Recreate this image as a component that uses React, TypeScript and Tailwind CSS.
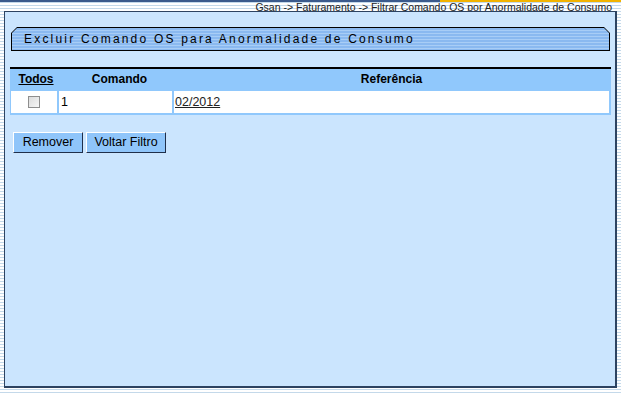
export default function App() {
  return (
    <div className="w-[621px] h-[394px] flex flex-col overflow-hidden bg-[repeating-linear-gradient(to_bottom,#ffffff_0px,#ffffff_2px,#c4d9ea_2px,#c4d9ea_3px)] font-['Liberation_Sans',Arial,sans-serif] text-black">
      {/* top strip */}
      <div className="flex h-[2px] shrink-0">
        <div className="w-[440px] bg-[#3b5a8c]" />
        <div className="flex-1 bg-[#f2b300]" />
      </div>
      <div className="h-[9px] shrink-0 flex justify-end pr-[9px] text-[10.5px] leading-[10px] text-[#222]">
        Gsan -&gt; Faturamento -&gt; Filtrar Comando OS por Anormalidade de Consumo
      </div>

      {/* main panel */}
      <div className="ml-[4px] w-[613px] h-[377px] shrink-0 bg-[#cbe5fe] border-l border-t border-r-2 border-b-2 border-[#2d4361] flex flex-col">
        {/* title bar */}
        <div className="mt-[15px] ml-[6px] mr-[5px] h-[24px] bg-black [clip-path:polygon(6px_0,calc(100%-6px)_0,100%_6px,100%_100%,0_100%,0_6px)] p-[1px]">
          <div className="h-full flex items-center pl-[12px] tracking-[2.2px] text-[12px] bg-[repeating-linear-gradient(to_bottom,#8ab9f0_0px,#8ab9f0_2px,#a8cdf6_2px,#a8cdf6_3px)] [clip-path:polygon(5px_0,calc(100%-5px)_0,100%_5px,100%_100%,0_100%,0_5px)]">
            Excluir Comando OS para Anormalidade de Consumo
          </div>
        </div>

        {/* table */}
        <div className="mt-[16px] ml-[5px] mr-[4px] bg-[#90c8fc] border-t-2 border-black pl-[1px] pr-[2px] pb-[2px]">
          <div className="grid grid-cols-[46px_113px_1fr] gap-x-[2px] h-[20px] items-center text-[12px] font-bold">
            <div className="text-center underline pl-[4px]">Todos</div>
            <div className="text-center pl-[8px]">Comando</div>
            <div className="text-center">Referência</div>
          </div>
          <div className="grid grid-cols-[46px_113px_1fr] gap-x-[2px] mt-[2px] h-[22px] text-[12.5px]">
            <div className="bg-white flex items-center justify-center pr-[1px]">
              <div className="w-[12px] h-[12px] border border-[#8e8e8e] bg-[linear-gradient(135deg,#dcdcdc,#f7f7f7)]" />
            </div>
            <div className="bg-white flex items-center pl-[2px]">1</div>
            <div className="bg-white flex items-center pl-[1px]">
              <span className="underline text-[#222]">02/2012</span>
            </div>
          </div>
        </div>

        {/* buttons */}
        <div className="mt-[17px] ml-[8px] flex gap-[3px] text-[12.5px]">
          <div className="w-[70px] h-[21px] flex items-center justify-center bg-[#8fc5fa] border-t border-l border-white border-r border-b border-r-[#1f2f4a] border-b-[#1f2f4a]">
            Remover
          </div>
          <div className="w-[80px] h-[21px] flex items-center justify-center bg-[#8fc5fa] border-t border-l border-white border-r border-b border-r-[#1f2f4a] border-b-[#1f2f4a]">
            Voltar Filtro
          </div>
        </div>
      </div>
    </div>
  );
}
